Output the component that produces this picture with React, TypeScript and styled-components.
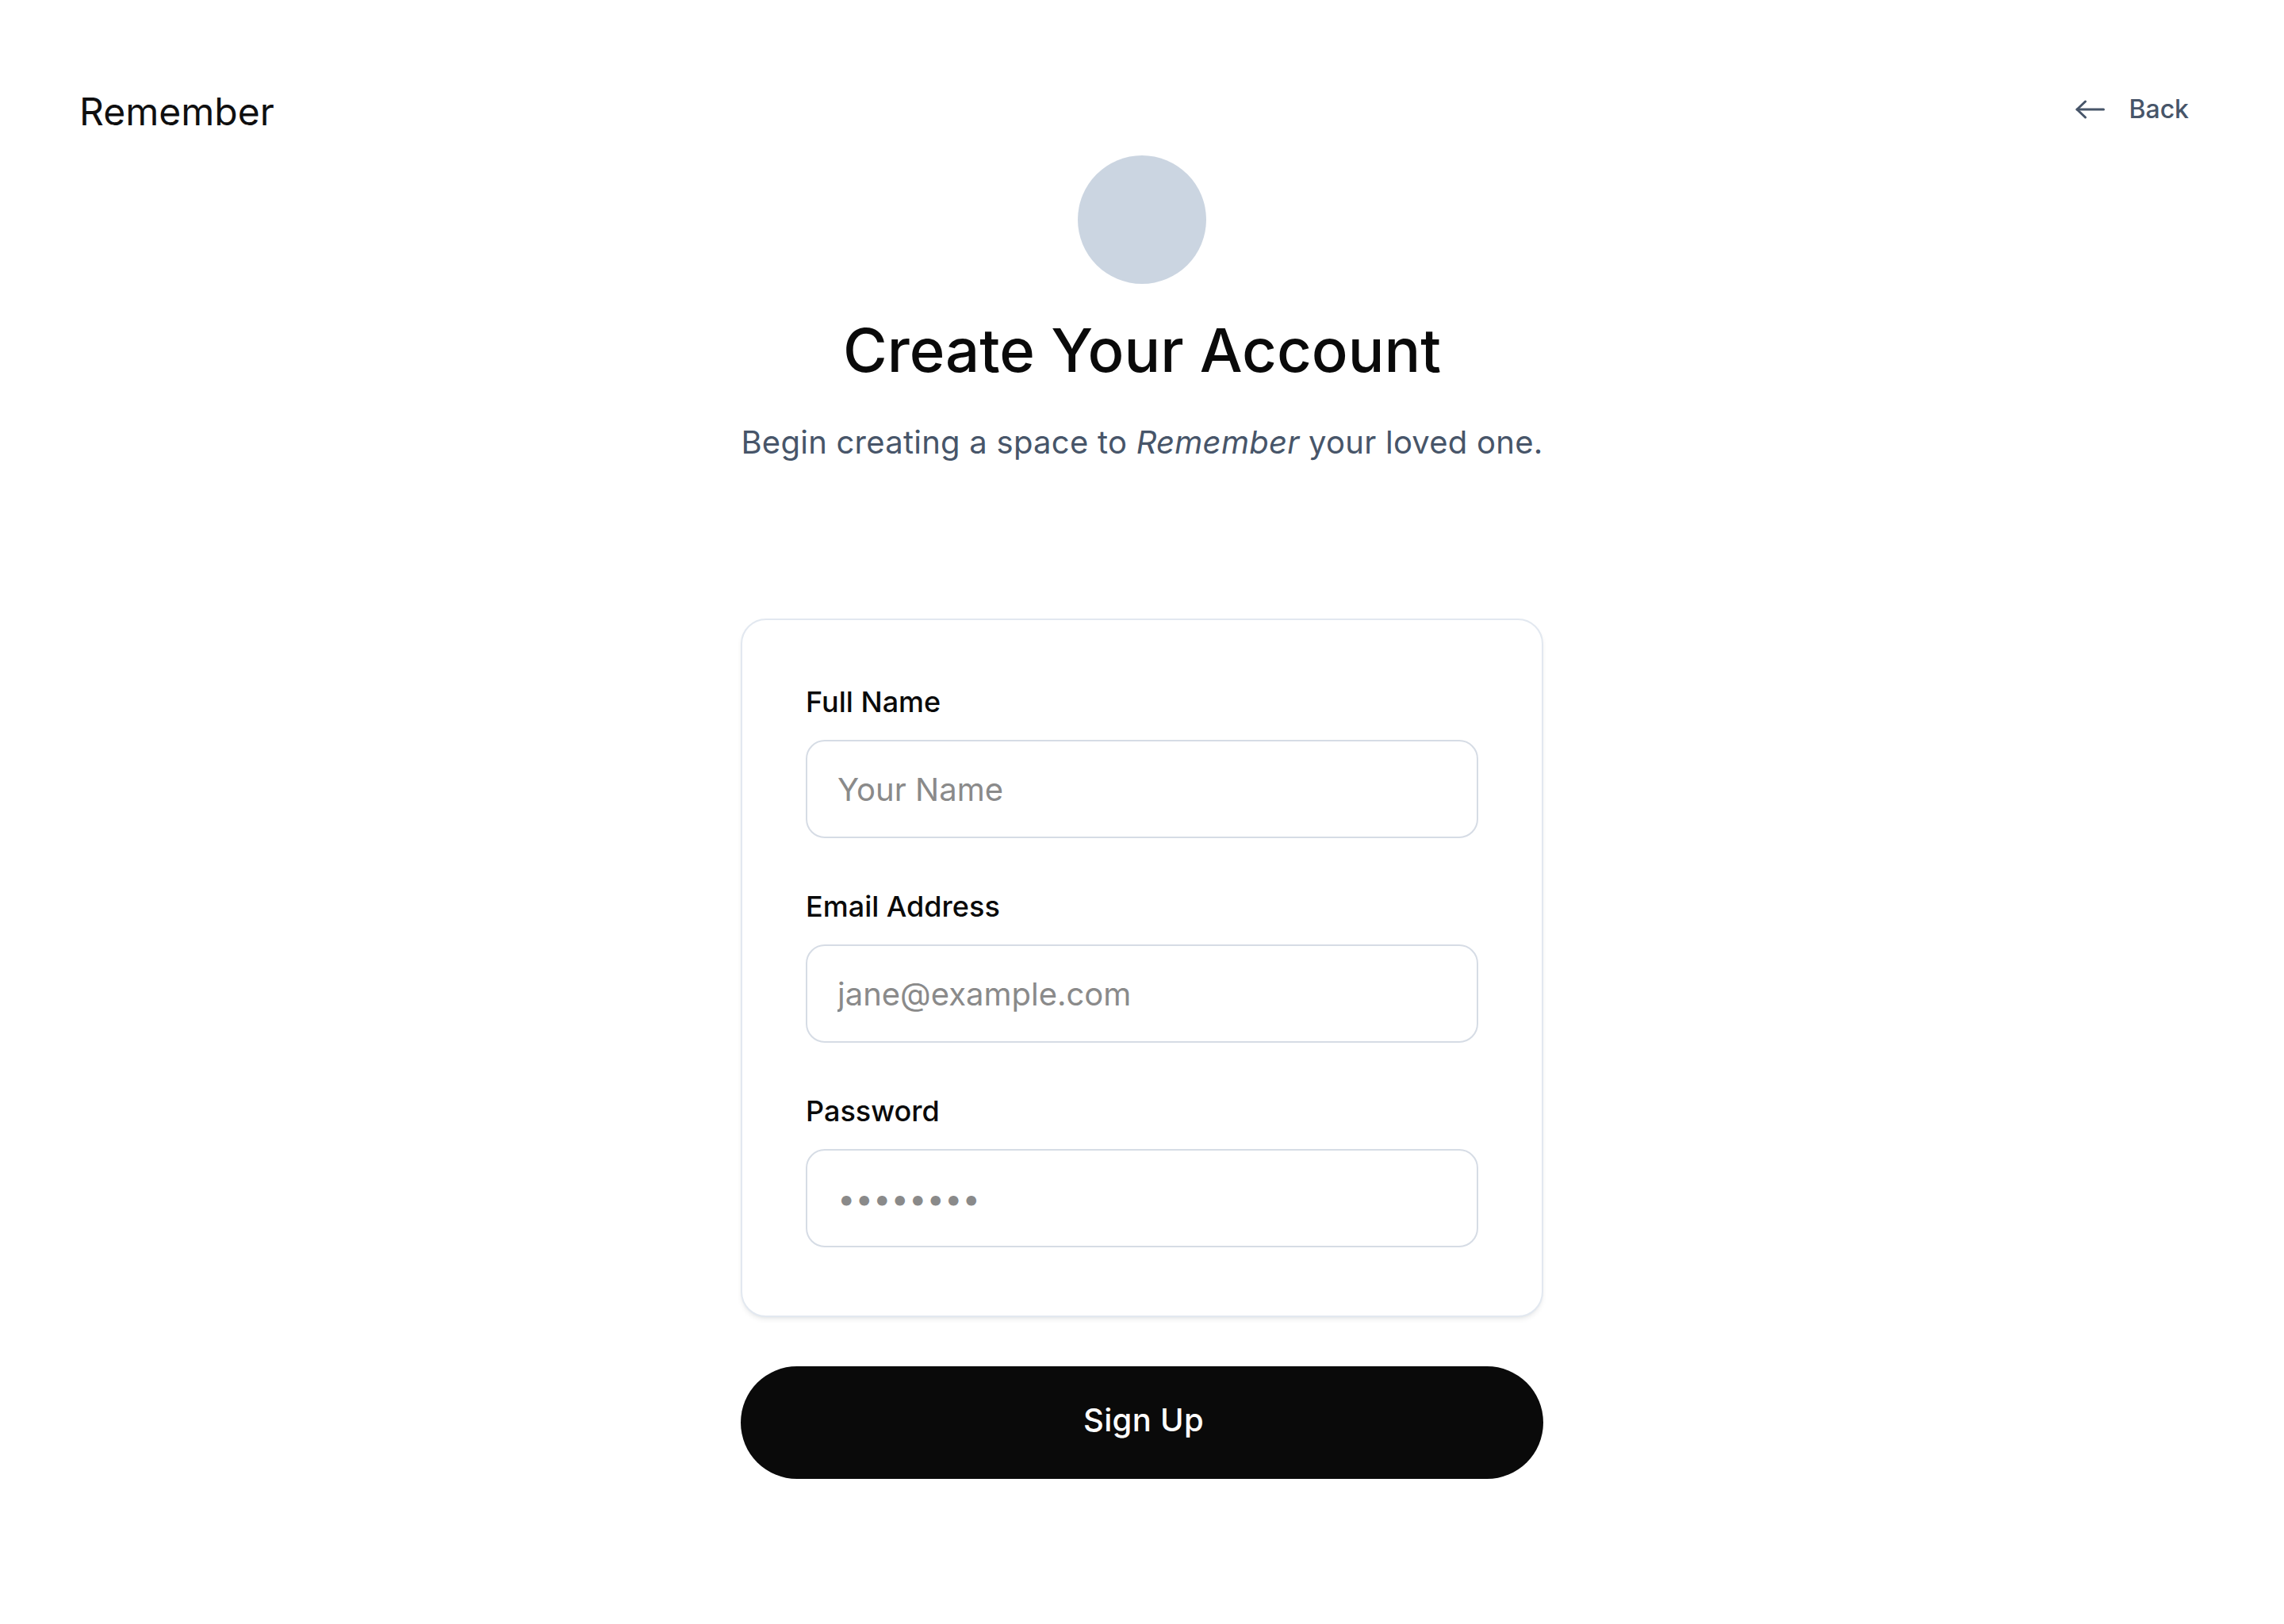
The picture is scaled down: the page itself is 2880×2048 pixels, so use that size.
import { createGlobalStyle } from "styled-components";
import styled from "styled-components";

const GlobalStyle = createGlobalStyle`
  html, body {
    margin: 0;
    padding: 0;
    background: #ffffff;
    font-family: Inter, "Noto Sans", "Liberation Sans", sans-serif;
    color: #0a0a0a;
  }
  * {
    box-sizing: border-box;
  }
`;

const Page = styled.div`
  display: grid;
  grid-template-columns: 1fr 1012px 1fr;
  min-height: 2048px;
  align-items: start;
`;

const LeftCell = styled.div`
  padding: 112px 0 0 100px;
`;

const RightCell = styled.div`
  display: flex;
  justify-content: flex-end;
  padding: 118px 120px 0 0;
`;

const Logo = styled.div`
  font-size: 48px;
  line-height: 58px;
  font-weight: 400;
  color: #0f0f10;
`;

const BackLink = styled.a`
  display: flex;
  align-items: center;
  gap: 30px;
  font-size: 32px;
  line-height: 40px;
  font-weight: 500;
  color: #475569;
  text-decoration: none;
  cursor: pointer;
`;

const Main = styled.main`
  display: flex;
  flex-direction: column;
  align-items: center;
  padding-top: 196px;
`;

const Avatar = styled.div`
  width: 162px;
  height: 162px;
  border-radius: 50%;
  background: #cbd5e1;
`;

const Title = styled.h1`
  margin: 37px 0 0;
  font-size: 76px;
  line-height: 92px;
  font-weight: 500;
  color: #0a0a0a;
  white-space: nowrap;
`;

const Subtitle = styled.p`
  margin: 41px 0 0;
  font-size: 40px;
  line-height: 60px;
  font-weight: 400;
  letter-spacing: 0.25px;
  color: #475569;
  white-space: nowrap;
  & em {
    font-style: italic;
  }
`;

const Card = styled.form`
  width: 100%;
  margin-top: 192px;
  padding: 80px 80px 86px;
  border: 2px solid #e2e8f0;
  border-radius: 32px;
  background: #ffffff;
  box-shadow: 0 4px 6px -1px rgba(15, 23, 42, 0.08), 0 2px 4px -2px rgba(15, 23, 42, 0.06);
  display: flex;
  flex-direction: column;
  gap: 63px;
`;

const Field = styled.div`
  display: flex;
  flex-direction: column;
`;

const Label = styled.label`
  font-size: 36px;
  line-height: 46px;
  font-weight: 500;
  color: #0a0a0a;
  margin-bottom: 25px;
`;

const Input = styled.input`
  width: 100%;
  height: 124px;
  padding: 0 38px;
  border: 2px solid #d6dce5;
  border-radius: 24px;
  font-family: inherit;
  font-size: 40px;
  color: #0a0a0a;
  background: #ffffff;
  outline: none;
  &::placeholder {
    color: #8a8a8a;
  }
`;

const SubmitButton = styled.button`
  width: 100%;
  height: 142px;
  margin-top: 62px;
  padding: 0 0 8px 4px;
  border: none;
  border-radius: 999px;
  background: #0a0a0a;
  color: #ffffff;
  font-family: inherit;
  font-size: 40px;
  font-weight: 500;
  letter-spacing: 0.3px;
  cursor: pointer;
`;

const ArrowLeft = () => (
  <svg width="37" height="24" viewBox="0 0 37 24" fill="none" stroke="currentColor" strokeWidth="3" strokeLinecap="round" strokeLinejoin="round">
    <path d="M35.5 12H2" />
    <path d="M12.5 2L2 12l10.5 10" />
  </svg>
);

export default function App() {
  return (
    <>
      <GlobalStyle />
      <Page>
        <LeftCell>
          <Logo>Remember</Logo>
        </LeftCell>
        <Main>
          <Avatar />
          <Title>Create Your Account</Title>
          <Subtitle>
            Begin creating a space to <em>Remember</em> your loved one.
          </Subtitle>
          <Card onSubmit={e => e.preventDefault()}>
            <Field>
              <Label htmlFor="name">Full Name</Label>
              <Input id="name" type="text" placeholder="Your Name" />
            </Field>
            <Field>
              <Label htmlFor="email">Email Address</Label>
              <Input id="email" type="email" placeholder="jane@example.com" />
            </Field>
            <Field>
              <Label htmlFor="password">Password</Label>
              <Input id="password" type="password" placeholder="••••••••" />
            </Field>
          </Card>
          <SubmitButton type="button">Sign Up</SubmitButton>
        </Main>
        <RightCell>
          <BackLink>
            <ArrowLeft />
            Back
          </BackLink>
        </RightCell>
      </Page>
    </>
  );
}
